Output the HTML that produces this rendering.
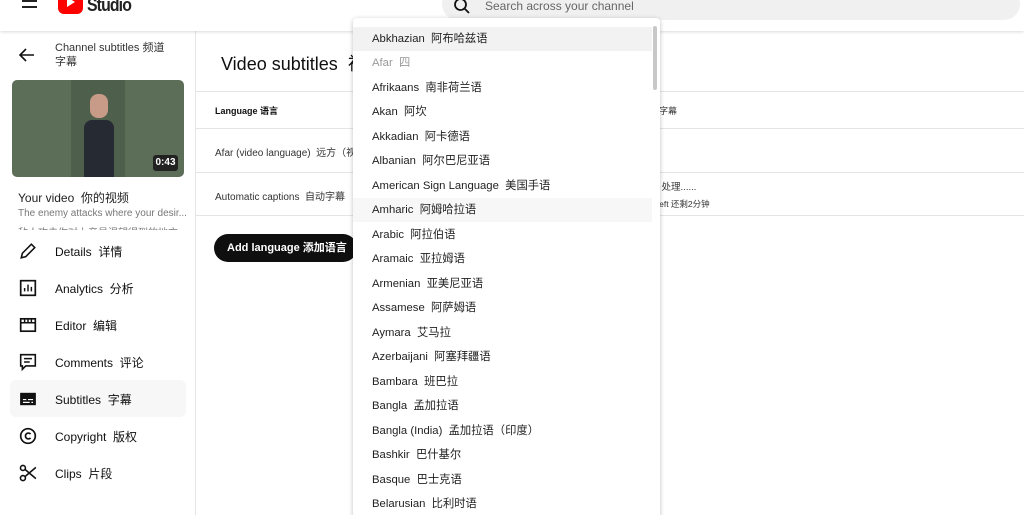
<!DOCTYPE html>
<html><head><meta charset="utf-8"><style>
*{margin:0;padding:0;box-sizing:border-box}
html,body{width:1024px;height:515px;overflow:hidden}
body{background:#fff;font-family:"Liberation Sans","Noto Sans CJK SC",sans-serif;color:#0f0f0f;position:relative}
.abs{position:absolute;white-space:nowrap}
.hdr{position:absolute;left:0;top:0;width:1024px;height:31px;background:#fff;box-shadow:0 1px 3px rgba(0,0,0,.15);z-index:2}
.side{position:absolute;left:0;top:31px;width:196px;height:484px;border-right:1px solid #e5e5e5}
.nav{position:absolute;left:10px;width:176px;height:37px;font-size:12px;color:#0f0f0f}
.nav span{position:absolute;left:45px;top:11px}
.nav svg{position:absolute;left:9px;top:10px}
.line{position:absolute;left:196px;width:828px;height:1px;background:#e5e5e5}
.dd{position:absolute;left:353px;top:18px;width:307px;height:510px;background:#fff;box-shadow:0 1px 5px rgba(0,0,0,.25);border-radius:4px;z-index:3;overflow:hidden}
.it{position:absolute;left:0;width:299px;height:24px;font-size:11.3px;padding-left:19px;line-height:24px;color:#1f1f1f}
</style></head><body>
<div class="hdr">
<div class="abs" style="left:22px;top:0;width:15px;height:2px;background:#222"></div>
<div class="abs" style="left:22px;top:6px;width:15px;height:2px;background:#222"></div>
<div class="abs" style="left:22px;top:-6px;width:15px;height:2px;background:#222"></div>
<div class="abs" style="left:58px;top:-8px;width:25px;height:22px;background:#f00;border-radius:6px"></div>
<div class="abs" style="left:67px;top:-3px;width:0;height:0;border-left:8px solid #fff;border-top:5px solid transparent;border-bottom:5px solid transparent"></div>
<div class="abs" style="left:87px;top:-5px;font-size:18px;font-weight:bold;letter-spacing:-1px;color:#222;transform:scaleX(0.88);transform-origin:left">Studio</div>
<div class="abs" style="left:442px;top:-12px;width:578px;height:32px;background:#f0f0f0;border-radius:16px"></div>
<svg class="abs" style="left:453px;top:-3px" width="18" height="18" viewBox="0 0 18 18"><circle cx="7.5" cy="7.5" r="5.5" fill="none" stroke="#111" stroke-width="1.8"/><path d="M11.5 11.5L16 16" stroke="#111" stroke-width="1.8"/></svg>
<div class="abs" style="left:485px;top:-1px;font-size:12px;color:#666">Search across your channel</div>
</div>
<div class="side">
<svg class="abs" style="left:19px;top:17px" width="16" height="14" viewBox="0 0 16 14"><path d="M15 7H2M7 1L1 7l6 6" fill="none" stroke="#111" stroke-width="1.6"/></svg>
<div class="abs" style="left:55px;top:10px;font-size:11px;line-height:14px;color:#333">Channel subtitles 频道<br>字幕</div>
<div class="abs" style="left:12px;top:49px;width:172px;height:97px;background:#5c6d58;border-radius:5px;overflow:hidden">
<div class="abs" style="left:59px;top:0;width:54px;height:97px;background:#4e5f4b"></div>
<div class="abs" style="left:72px;top:40px;width:30px;height:57px;background:#262a33;border-radius:8px 8px 0 0"></div>
<div class="abs" style="left:78px;top:14px;width:18px;height:24px;background:#c89a88;border-radius:8px"></div>
<div class="abs" style="left:141px;top:75px;width:25px;height:16px;background:#222;border-radius:3px;color:#fff;font-size:10px;font-weight:bold;text-align:center;line-height:16px">0:43</div>
</div>
<div class="abs" style="left:18px;top:158px;font-size:12px;color:#222">Your video &nbsp;你的视频</div>
<div class="abs" style="left:18px;top:177px;font-size:10px;color:#777">The enemy attacks where your desir...</div>
<div class="abs" style="left:18px;top:193px;font-size:10px;color:#777;height:6px;overflow:hidden">敌人攻击你对上帝最渴望得到的地方</div>
</div>
<div class="nav" style="top:232px"><svg width="18" height="18" viewBox="0 0 16 16"><path d="M2 14l1-4 8-8 3 3-8 8z" fill="none" stroke="#111" stroke-width="1.4"/></svg><span>Details &nbsp;详情</span></div>
<div class="nav" style="top:269px"><svg width="18" height="18" viewBox="0 0 16 16"><rect x="1.5" y="1.5" width="13" height="13" fill="none" stroke="#111" stroke-width="1.5"/><path d="M5 11V8M8 11V5M11 11V7" stroke="#111" stroke-width="1.3"/></svg><span>Analytics &nbsp;分析</span></div>
<div class="nav" style="top:306px"><svg width="18" height="18" viewBox="0 0 16 16"><rect x="1.5" y="2.5" width="13" height="11" fill="none" stroke="#111" stroke-width="1.5"/><path d="M1.5 6h13M5 2.5v3M8 2.5v3M11 2.5v3" stroke="#111" stroke-width="1.3"/></svg><span>Editor &nbsp;编辑</span></div>
<div class="nav" style="top:343px"><svg width="18" height="18" viewBox="0 0 16 16"><path d="M1.5 1.5h13v10H6l-3 3v-3H1.5z" fill="none" stroke="#111" stroke-width="1.4"/><path d="M4.5 5h7M4.5 8h5" stroke="#111" stroke-width="1.3"/></svg><span>Comments &nbsp;评论</span></div>
<div class="nav" style="top:380px;background:#f7f7f7;border-radius:6px"><svg width="18" height="18" viewBox="0 0 16 16"><rect x="1" y="2.5" width="14" height="11" fill="#111"/><path d="M3.5 8.5h3M8 8.5h4.5M3.5 11h6M11 11h1.5" stroke="#fff" stroke-width="1.1"/></svg><span>Subtitles &nbsp;字幕</span></div>
<div class="nav" style="top:417px"><svg width="18" height="18" viewBox="0 0 16 16"><circle cx="8" cy="8" r="6.5" fill="none" stroke="#111" stroke-width="1.5"/><path d="M10.3 6.3A2.6 2.6 0 1 0 10.3 9.7" fill="none" stroke="#111" stroke-width="1.5"/></svg><span>Copyright &nbsp;版权</span></div>
<div class="nav" style="top:454px"><svg width="18" height="18" viewBox="0 0 16 16"><circle cx="3.5" cy="3.5" r="2.2" fill="none" stroke="#111" stroke-width="1.4"/><circle cx="3.5" cy="12.5" r="2.2" fill="none" stroke="#111" stroke-width="1.4"/><path d="M5.3 4.8L15 13M5.3 11.2L15 3" stroke="#111" stroke-width="1.4"/></svg><span>Clips &nbsp;片段</span></div>

<div class="abs" style="left:221px;top:50px;font-size:18px;color:#0f0f0f">Video subtitles &nbsp;视</div>
<div class="line" style="top:91px"></div>
<div class="line" style="top:128px"></div>
<div class="line" style="top:172px"></div>
<div class="line" style="top:215px"></div>
<div class="abs" style="left:215px;top:104px;font-size:9px;font-weight:bold">Language 语言</div>
<div class="abs" style="left:215px;top:144px;font-size:10px;color:#333">Afar (video language) &nbsp;远方（视</div>
<div class="abs" style="left:215px;top:188px;font-size:10px;color:#333">Automatic captions &nbsp;自动字幕</div>
<div class="abs" style="left:622px;top:104px;font-size:9px;color:#333">Subtitles 字幕</div>
<div class="abs" style="left:604px;top:179px;font-size:9.5px;color:#333">Processing... 处理......</div>
<div class="abs" style="left:618px;top:198px;font-size:8.5px;color:#333">2 minutes left 还剩2分钟</div>
<div class="abs" style="left:214px;top:234px;width:143px;height:28px;background:#0f0f0f;border-radius:14px;color:#fff;font-size:11px;font-weight:bold;line-height:28px;padding-left:13px">Add language 添加语言</div>

<div class="dd">
<div class="it" style="top:9px;background:#f2f2f2">Abkhazian &nbsp;阿布哈兹语</div>
<div class="it" style="top:33px;color:#999">Afar &nbsp;四</div>
<div class="it" style="top:58px">Afrikaans &nbsp;南非荷兰语</div>
<div class="it" style="top:82px">Akan &nbsp;阿坎</div>
<div class="it" style="top:107px">Akkadian &nbsp;阿卡德语</div>
<div class="it" style="top:131px">Albanian &nbsp;阿尔巴尼亚语</div>
<div class="it" style="top:156px">American Sign Language &nbsp;美国手语</div>
<div class="it" style="top:180px;background:#f7f7f7">Amharic &nbsp;阿姆哈拉语</div>
<div class="it" style="top:205px">Arabic &nbsp;阿拉伯语</div>
<div class="it" style="top:229px">Aramaic &nbsp;亚拉姆语</div>
<div class="it" style="top:254px">Armenian &nbsp;亚美尼亚语</div>
<div class="it" style="top:278px">Assamese &nbsp;阿萨姆语</div>
<div class="it" style="top:303px">Aymara &nbsp;艾马拉</div>
<div class="it" style="top:327px">Azerbaijani &nbsp;阿塞拜疆语</div>
<div class="it" style="top:352px">Bambara &nbsp;班巴拉</div>
<div class="it" style="top:376px">Bangla &nbsp;孟加拉语</div>
<div class="it" style="top:401px">Bangla (India) &nbsp;孟加拉语（印度）</div>
<div class="it" style="top:425px">Bashkir &nbsp;巴什基尔</div>
<div class="it" style="top:450px">Basque &nbsp;巴士克语</div>
<div class="it" style="top:474px">Belarusian &nbsp;比利时语</div>
<div class="abs" style="left:300px;top:8px;width:4px;height:64px;background:#c8c8c8;border-radius:2px"></div>
</div>
</body></html>
